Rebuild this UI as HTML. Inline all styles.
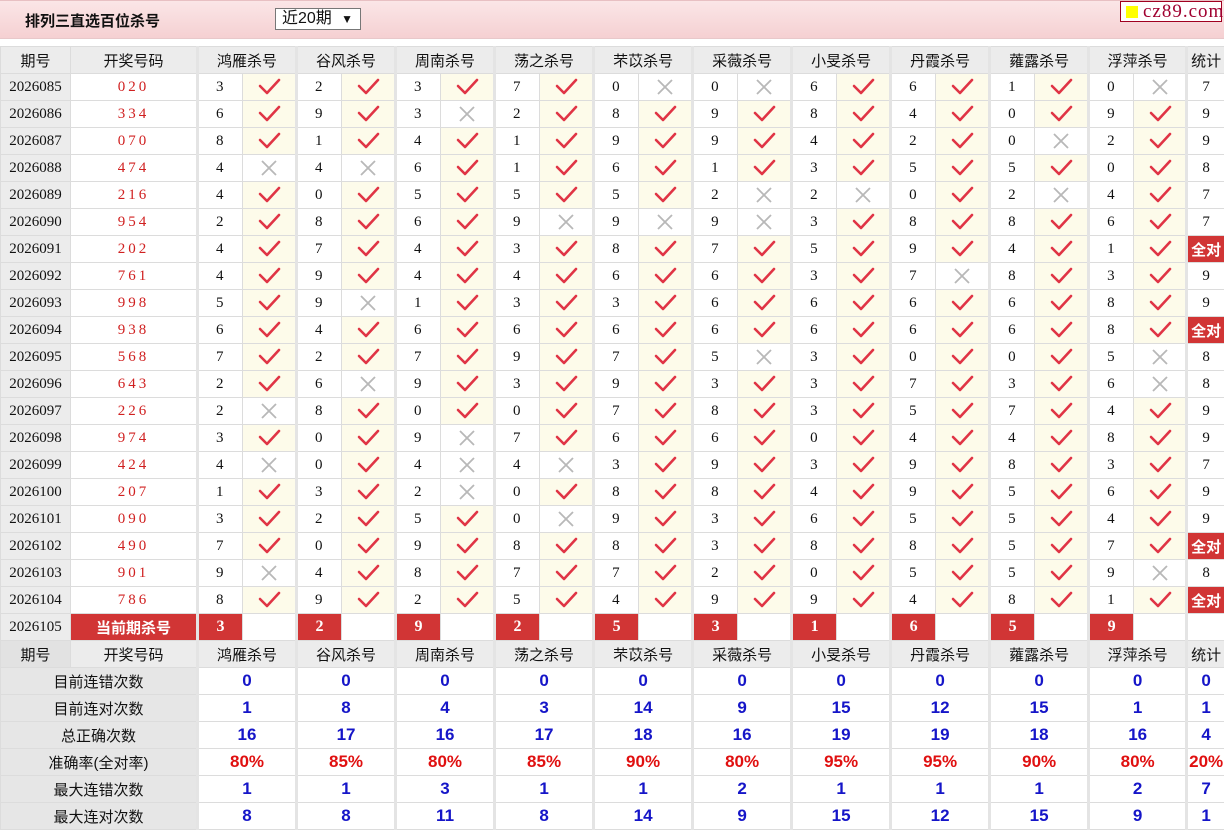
<!DOCTYPE html>
<html><head><meta charset="utf-8">
<style>
body{margin:0;width:1224px;height:828px;overflow:hidden;background:#fff;font-family:"Liberation Sans","Noto Sans CJK SC",sans-serif;}
.bar{position:absolute;left:0;top:0;width:1224px;height:37px;background:linear-gradient(#fbe6e7,#f5d0d2);border-top:1px solid #e8c0c3;border-bottom:1px solid #e8c8ca;}
.title{position:absolute;left:25px;top:9px;font-size:15px;font-weight:bold;color:#111;}
.sel{position:absolute;left:275px;top:7px;width:86px;height:22px;border:1px solid #777;background:#fff;font-size:16px;box-sizing:border-box;padding-left:6px;line-height:20px;color:#111;}
.sel span{position:absolute;right:7px;top:0;font-size:12px;}
.logo{position:absolute;left:1120px;top:0;width:102px;height:21px;border:1px solid #a00020;background:#fff;box-sizing:border-box;font-family:"Liberation Serif",serif;font-size:19px;color:#a00030;line-height:19px;padding-left:22px;letter-spacing:1px;}
.logo b{position:absolute;left:5px;top:4px;width:12px;height:12px;background:#ffff00;}
table{position:absolute;left:0;top:46px;border-collapse:collapse;table-layout:fixed;width:1224px;}
td{height:26px;border:1px solid #dcdcdc;padding:0;text-align:center;font-family:"Liberation Serif","Noto Sans CJK SC",serif;font-size:15px;color:#111;white-space:nowrap;overflow:hidden;}
td.p{background:#ececec;}
td.h{background:#ececec;font-family:"Liberation Sans","Noto Sans CJK SC",sans-serif;font-size:15px;}
td.n{color:#d02020;letter-spacing:3px;}
td.g{border-left:3px solid #e4e4e4;text-align:left;padding-left:17px;}
td.c{background:#fdfbea;}
td.s{border-left:3px solid #e4e4e4;}
svg{display:block;margin:0 auto;}
td.q{background:#d13535;color:#fff;font-weight:bold;font-family:"Liberation Sans","Noto Sans CJK SC",sans-serif;font-size:15px;}
td.cur{background:#d13535;color:#fff;font-weight:bold;font-size:16px;border-left:3px solid #e4e4e4;}
td.l{background:#e6e6e6;font-family:"Liberation Sans","Noto Sans CJK SC",sans-serif;}
td.v{border-left:3px solid #e4e4e4;font-family:"Liberation Sans",sans-serif;font-weight:bold;font-size:17px;color:#1515c8;}
td.r{color:#e01010;}
</style></head><body>
<svg width="0" height="0" style="position:absolute"><defs>
<symbol id="k" viewBox="0 0 24 20"><path d="M3 9 L10 16 L22 3" fill="none" stroke="#e03445" stroke-width="2.6" stroke-linecap="round" stroke-linejoin="round"/></symbol>
<symbol id="x" viewBox="0 0 20 20"><path d="M3 3 L17 17 M17 3 L3 17" fill="none" stroke="#b8b8b8" stroke-width="1.8"/></symbol>
</defs></svg>
<div class="bar"><div class="title">排列三直选百位杀号</div><div class="sel">近20期<span>&#9660;</span></div><div class="logo"><b></b>cz89.com</div></div>
<table>
<colgroup><col style="width:70px"><col style="width:127px">
<col style="width:45px"><col style="width:54px"><col style="width:45px"><col style="width:54px"><col style="width:45px"><col style="width:54px"><col style="width:45px"><col style="width:54px"><col style="width:45px"><col style="width:54px"><col style="width:45px"><col style="width:54px"><col style="width:45px"><col style="width:54px"><col style="width:45px"><col style="width:54px"><col style="width:45px"><col style="width:54px"><col style="width:45px"><col style="width:53px"><col style="width:38px"></colgroup>
<tr><td class="h">期号</td><td class="h">开奖号码</td><td class="h s" colspan="2">鸿雁杀号</td><td class="h s" colspan="2">谷风杀号</td><td class="h s" colspan="2">周南杀号</td><td class="h s" colspan="2">荡之杀号</td><td class="h s" colspan="2">芣苡杀号</td><td class="h s" colspan="2">采薇杀号</td><td class="h s" colspan="2">小旻杀号</td><td class="h s" colspan="2">丹霞杀号</td><td class="h s" colspan="2">蕹露杀号</td><td class="h s" colspan="2">浮萍杀号</td><td class="h s">统计</td></tr>
<tr><td class="p">2026085</td><td class="n">020</td><td class="g">3</td><td class="c"><svg width="24" height="20"><use href="#k"/></svg></td><td class="g">2</td><td class="c"><svg width="24" height="20"><use href="#k"/></svg></td><td class="g">3</td><td class="c"><svg width="24" height="20"><use href="#k"/></svg></td><td class="g">7</td><td class="c"><svg width="24" height="20"><use href="#k"/></svg></td><td class="g">0</td><td><svg width="20" height="20"><use href="#x"/></svg></td><td class="g">0</td><td><svg width="20" height="20"><use href="#x"/></svg></td><td class="g">6</td><td class="c"><svg width="24" height="20"><use href="#k"/></svg></td><td class="g">6</td><td class="c"><svg width="24" height="20"><use href="#k"/></svg></td><td class="g">1</td><td class="c"><svg width="24" height="20"><use href="#k"/></svg></td><td class="g">0</td><td><svg width="20" height="20"><use href="#x"/></svg></td><td class="s">7</td></tr>
<tr><td class="p">2026086</td><td class="n">334</td><td class="g">6</td><td class="c"><svg width="24" height="20"><use href="#k"/></svg></td><td class="g">9</td><td class="c"><svg width="24" height="20"><use href="#k"/></svg></td><td class="g">3</td><td><svg width="20" height="20"><use href="#x"/></svg></td><td class="g">2</td><td class="c"><svg width="24" height="20"><use href="#k"/></svg></td><td class="g">8</td><td class="c"><svg width="24" height="20"><use href="#k"/></svg></td><td class="g">9</td><td class="c"><svg width="24" height="20"><use href="#k"/></svg></td><td class="g">8</td><td class="c"><svg width="24" height="20"><use href="#k"/></svg></td><td class="g">4</td><td class="c"><svg width="24" height="20"><use href="#k"/></svg></td><td class="g">0</td><td class="c"><svg width="24" height="20"><use href="#k"/></svg></td><td class="g">9</td><td class="c"><svg width="24" height="20"><use href="#k"/></svg></td><td class="s">9</td></tr>
<tr><td class="p">2026087</td><td class="n">070</td><td class="g">8</td><td class="c"><svg width="24" height="20"><use href="#k"/></svg></td><td class="g">1</td><td class="c"><svg width="24" height="20"><use href="#k"/></svg></td><td class="g">4</td><td class="c"><svg width="24" height="20"><use href="#k"/></svg></td><td class="g">1</td><td class="c"><svg width="24" height="20"><use href="#k"/></svg></td><td class="g">9</td><td class="c"><svg width="24" height="20"><use href="#k"/></svg></td><td class="g">9</td><td class="c"><svg width="24" height="20"><use href="#k"/></svg></td><td class="g">4</td><td class="c"><svg width="24" height="20"><use href="#k"/></svg></td><td class="g">2</td><td class="c"><svg width="24" height="20"><use href="#k"/></svg></td><td class="g">0</td><td><svg width="20" height="20"><use href="#x"/></svg></td><td class="g">2</td><td class="c"><svg width="24" height="20"><use href="#k"/></svg></td><td class="s">9</td></tr>
<tr><td class="p">2026088</td><td class="n">474</td><td class="g">4</td><td><svg width="20" height="20"><use href="#x"/></svg></td><td class="g">4</td><td><svg width="20" height="20"><use href="#x"/></svg></td><td class="g">6</td><td class="c"><svg width="24" height="20"><use href="#k"/></svg></td><td class="g">1</td><td class="c"><svg width="24" height="20"><use href="#k"/></svg></td><td class="g">6</td><td class="c"><svg width="24" height="20"><use href="#k"/></svg></td><td class="g">1</td><td class="c"><svg width="24" height="20"><use href="#k"/></svg></td><td class="g">3</td><td class="c"><svg width="24" height="20"><use href="#k"/></svg></td><td class="g">5</td><td class="c"><svg width="24" height="20"><use href="#k"/></svg></td><td class="g">5</td><td class="c"><svg width="24" height="20"><use href="#k"/></svg></td><td class="g">0</td><td class="c"><svg width="24" height="20"><use href="#k"/></svg></td><td class="s">8</td></tr>
<tr><td class="p">2026089</td><td class="n">216</td><td class="g">4</td><td class="c"><svg width="24" height="20"><use href="#k"/></svg></td><td class="g">0</td><td class="c"><svg width="24" height="20"><use href="#k"/></svg></td><td class="g">5</td><td class="c"><svg width="24" height="20"><use href="#k"/></svg></td><td class="g">5</td><td class="c"><svg width="24" height="20"><use href="#k"/></svg></td><td class="g">5</td><td class="c"><svg width="24" height="20"><use href="#k"/></svg></td><td class="g">2</td><td><svg width="20" height="20"><use href="#x"/></svg></td><td class="g">2</td><td><svg width="20" height="20"><use href="#x"/></svg></td><td class="g">0</td><td class="c"><svg width="24" height="20"><use href="#k"/></svg></td><td class="g">2</td><td><svg width="20" height="20"><use href="#x"/></svg></td><td class="g">4</td><td class="c"><svg width="24" height="20"><use href="#k"/></svg></td><td class="s">7</td></tr>
<tr><td class="p">2026090</td><td class="n">954</td><td class="g">2</td><td class="c"><svg width="24" height="20"><use href="#k"/></svg></td><td class="g">8</td><td class="c"><svg width="24" height="20"><use href="#k"/></svg></td><td class="g">6</td><td class="c"><svg width="24" height="20"><use href="#k"/></svg></td><td class="g">9</td><td><svg width="20" height="20"><use href="#x"/></svg></td><td class="g">9</td><td><svg width="20" height="20"><use href="#x"/></svg></td><td class="g">9</td><td><svg width="20" height="20"><use href="#x"/></svg></td><td class="g">3</td><td class="c"><svg width="24" height="20"><use href="#k"/></svg></td><td class="g">8</td><td class="c"><svg width="24" height="20"><use href="#k"/></svg></td><td class="g">8</td><td class="c"><svg width="24" height="20"><use href="#k"/></svg></td><td class="g">6</td><td class="c"><svg width="24" height="20"><use href="#k"/></svg></td><td class="s">7</td></tr>
<tr><td class="p">2026091</td><td class="n">202</td><td class="g">4</td><td class="c"><svg width="24" height="20"><use href="#k"/></svg></td><td class="g">7</td><td class="c"><svg width="24" height="20"><use href="#k"/></svg></td><td class="g">4</td><td class="c"><svg width="24" height="20"><use href="#k"/></svg></td><td class="g">3</td><td class="c"><svg width="24" height="20"><use href="#k"/></svg></td><td class="g">8</td><td class="c"><svg width="24" height="20"><use href="#k"/></svg></td><td class="g">7</td><td class="c"><svg width="24" height="20"><use href="#k"/></svg></td><td class="g">5</td><td class="c"><svg width="24" height="20"><use href="#k"/></svg></td><td class="g">9</td><td class="c"><svg width="24" height="20"><use href="#k"/></svg></td><td class="g">4</td><td class="c"><svg width="24" height="20"><use href="#k"/></svg></td><td class="g">1</td><td class="c"><svg width="24" height="20"><use href="#k"/></svg></td><td class="s q">全对</td></tr>
<tr><td class="p">2026092</td><td class="n">761</td><td class="g">4</td><td class="c"><svg width="24" height="20"><use href="#k"/></svg></td><td class="g">9</td><td class="c"><svg width="24" height="20"><use href="#k"/></svg></td><td class="g">4</td><td class="c"><svg width="24" height="20"><use href="#k"/></svg></td><td class="g">4</td><td class="c"><svg width="24" height="20"><use href="#k"/></svg></td><td class="g">6</td><td class="c"><svg width="24" height="20"><use href="#k"/></svg></td><td class="g">6</td><td class="c"><svg width="24" height="20"><use href="#k"/></svg></td><td class="g">3</td><td class="c"><svg width="24" height="20"><use href="#k"/></svg></td><td class="g">7</td><td><svg width="20" height="20"><use href="#x"/></svg></td><td class="g">8</td><td class="c"><svg width="24" height="20"><use href="#k"/></svg></td><td class="g">3</td><td class="c"><svg width="24" height="20"><use href="#k"/></svg></td><td class="s">9</td></tr>
<tr><td class="p">2026093</td><td class="n">998</td><td class="g">5</td><td class="c"><svg width="24" height="20"><use href="#k"/></svg></td><td class="g">9</td><td><svg width="20" height="20"><use href="#x"/></svg></td><td class="g">1</td><td class="c"><svg width="24" height="20"><use href="#k"/></svg></td><td class="g">3</td><td class="c"><svg width="24" height="20"><use href="#k"/></svg></td><td class="g">3</td><td class="c"><svg width="24" height="20"><use href="#k"/></svg></td><td class="g">6</td><td class="c"><svg width="24" height="20"><use href="#k"/></svg></td><td class="g">6</td><td class="c"><svg width="24" height="20"><use href="#k"/></svg></td><td class="g">6</td><td class="c"><svg width="24" height="20"><use href="#k"/></svg></td><td class="g">6</td><td class="c"><svg width="24" height="20"><use href="#k"/></svg></td><td class="g">8</td><td class="c"><svg width="24" height="20"><use href="#k"/></svg></td><td class="s">9</td></tr>
<tr><td class="p">2026094</td><td class="n">938</td><td class="g">6</td><td class="c"><svg width="24" height="20"><use href="#k"/></svg></td><td class="g">4</td><td class="c"><svg width="24" height="20"><use href="#k"/></svg></td><td class="g">6</td><td class="c"><svg width="24" height="20"><use href="#k"/></svg></td><td class="g">6</td><td class="c"><svg width="24" height="20"><use href="#k"/></svg></td><td class="g">6</td><td class="c"><svg width="24" height="20"><use href="#k"/></svg></td><td class="g">6</td><td class="c"><svg width="24" height="20"><use href="#k"/></svg></td><td class="g">6</td><td class="c"><svg width="24" height="20"><use href="#k"/></svg></td><td class="g">6</td><td class="c"><svg width="24" height="20"><use href="#k"/></svg></td><td class="g">6</td><td class="c"><svg width="24" height="20"><use href="#k"/></svg></td><td class="g">8</td><td class="c"><svg width="24" height="20"><use href="#k"/></svg></td><td class="s q">全对</td></tr>
<tr><td class="p">2026095</td><td class="n">568</td><td class="g">7</td><td class="c"><svg width="24" height="20"><use href="#k"/></svg></td><td class="g">2</td><td class="c"><svg width="24" height="20"><use href="#k"/></svg></td><td class="g">7</td><td class="c"><svg width="24" height="20"><use href="#k"/></svg></td><td class="g">9</td><td class="c"><svg width="24" height="20"><use href="#k"/></svg></td><td class="g">7</td><td class="c"><svg width="24" height="20"><use href="#k"/></svg></td><td class="g">5</td><td><svg width="20" height="20"><use href="#x"/></svg></td><td class="g">3</td><td class="c"><svg width="24" height="20"><use href="#k"/></svg></td><td class="g">0</td><td class="c"><svg width="24" height="20"><use href="#k"/></svg></td><td class="g">0</td><td class="c"><svg width="24" height="20"><use href="#k"/></svg></td><td class="g">5</td><td><svg width="20" height="20"><use href="#x"/></svg></td><td class="s">8</td></tr>
<tr><td class="p">2026096</td><td class="n">643</td><td class="g">2</td><td class="c"><svg width="24" height="20"><use href="#k"/></svg></td><td class="g">6</td><td><svg width="20" height="20"><use href="#x"/></svg></td><td class="g">9</td><td class="c"><svg width="24" height="20"><use href="#k"/></svg></td><td class="g">3</td><td class="c"><svg width="24" height="20"><use href="#k"/></svg></td><td class="g">9</td><td class="c"><svg width="24" height="20"><use href="#k"/></svg></td><td class="g">3</td><td class="c"><svg width="24" height="20"><use href="#k"/></svg></td><td class="g">3</td><td class="c"><svg width="24" height="20"><use href="#k"/></svg></td><td class="g">7</td><td class="c"><svg width="24" height="20"><use href="#k"/></svg></td><td class="g">3</td><td class="c"><svg width="24" height="20"><use href="#k"/></svg></td><td class="g">6</td><td><svg width="20" height="20"><use href="#x"/></svg></td><td class="s">8</td></tr>
<tr><td class="p">2026097</td><td class="n">226</td><td class="g">2</td><td><svg width="20" height="20"><use href="#x"/></svg></td><td class="g">8</td><td class="c"><svg width="24" height="20"><use href="#k"/></svg></td><td class="g">0</td><td class="c"><svg width="24" height="20"><use href="#k"/></svg></td><td class="g">0</td><td class="c"><svg width="24" height="20"><use href="#k"/></svg></td><td class="g">7</td><td class="c"><svg width="24" height="20"><use href="#k"/></svg></td><td class="g">8</td><td class="c"><svg width="24" height="20"><use href="#k"/></svg></td><td class="g">3</td><td class="c"><svg width="24" height="20"><use href="#k"/></svg></td><td class="g">5</td><td class="c"><svg width="24" height="20"><use href="#k"/></svg></td><td class="g">7</td><td class="c"><svg width="24" height="20"><use href="#k"/></svg></td><td class="g">4</td><td class="c"><svg width="24" height="20"><use href="#k"/></svg></td><td class="s">9</td></tr>
<tr><td class="p">2026098</td><td class="n">974</td><td class="g">3</td><td class="c"><svg width="24" height="20"><use href="#k"/></svg></td><td class="g">0</td><td class="c"><svg width="24" height="20"><use href="#k"/></svg></td><td class="g">9</td><td><svg width="20" height="20"><use href="#x"/></svg></td><td class="g">7</td><td class="c"><svg width="24" height="20"><use href="#k"/></svg></td><td class="g">6</td><td class="c"><svg width="24" height="20"><use href="#k"/></svg></td><td class="g">6</td><td class="c"><svg width="24" height="20"><use href="#k"/></svg></td><td class="g">0</td><td class="c"><svg width="24" height="20"><use href="#k"/></svg></td><td class="g">4</td><td class="c"><svg width="24" height="20"><use href="#k"/></svg></td><td class="g">4</td><td class="c"><svg width="24" height="20"><use href="#k"/></svg></td><td class="g">8</td><td class="c"><svg width="24" height="20"><use href="#k"/></svg></td><td class="s">9</td></tr>
<tr><td class="p">2026099</td><td class="n">424</td><td class="g">4</td><td><svg width="20" height="20"><use href="#x"/></svg></td><td class="g">0</td><td class="c"><svg width="24" height="20"><use href="#k"/></svg></td><td class="g">4</td><td><svg width="20" height="20"><use href="#x"/></svg></td><td class="g">4</td><td><svg width="20" height="20"><use href="#x"/></svg></td><td class="g">3</td><td class="c"><svg width="24" height="20"><use href="#k"/></svg></td><td class="g">9</td><td class="c"><svg width="24" height="20"><use href="#k"/></svg></td><td class="g">3</td><td class="c"><svg width="24" height="20"><use href="#k"/></svg></td><td class="g">9</td><td class="c"><svg width="24" height="20"><use href="#k"/></svg></td><td class="g">8</td><td class="c"><svg width="24" height="20"><use href="#k"/></svg></td><td class="g">3</td><td class="c"><svg width="24" height="20"><use href="#k"/></svg></td><td class="s">7</td></tr>
<tr><td class="p">2026100</td><td class="n">207</td><td class="g">1</td><td class="c"><svg width="24" height="20"><use href="#k"/></svg></td><td class="g">3</td><td class="c"><svg width="24" height="20"><use href="#k"/></svg></td><td class="g">2</td><td><svg width="20" height="20"><use href="#x"/></svg></td><td class="g">0</td><td class="c"><svg width="24" height="20"><use href="#k"/></svg></td><td class="g">8</td><td class="c"><svg width="24" height="20"><use href="#k"/></svg></td><td class="g">8</td><td class="c"><svg width="24" height="20"><use href="#k"/></svg></td><td class="g">4</td><td class="c"><svg width="24" height="20"><use href="#k"/></svg></td><td class="g">9</td><td class="c"><svg width="24" height="20"><use href="#k"/></svg></td><td class="g">5</td><td class="c"><svg width="24" height="20"><use href="#k"/></svg></td><td class="g">6</td><td class="c"><svg width="24" height="20"><use href="#k"/></svg></td><td class="s">9</td></tr>
<tr><td class="p">2026101</td><td class="n">090</td><td class="g">3</td><td class="c"><svg width="24" height="20"><use href="#k"/></svg></td><td class="g">2</td><td class="c"><svg width="24" height="20"><use href="#k"/></svg></td><td class="g">5</td><td class="c"><svg width="24" height="20"><use href="#k"/></svg></td><td class="g">0</td><td><svg width="20" height="20"><use href="#x"/></svg></td><td class="g">9</td><td class="c"><svg width="24" height="20"><use href="#k"/></svg></td><td class="g">3</td><td class="c"><svg width="24" height="20"><use href="#k"/></svg></td><td class="g">6</td><td class="c"><svg width="24" height="20"><use href="#k"/></svg></td><td class="g">5</td><td class="c"><svg width="24" height="20"><use href="#k"/></svg></td><td class="g">5</td><td class="c"><svg width="24" height="20"><use href="#k"/></svg></td><td class="g">4</td><td class="c"><svg width="24" height="20"><use href="#k"/></svg></td><td class="s">9</td></tr>
<tr><td class="p">2026102</td><td class="n">490</td><td class="g">7</td><td class="c"><svg width="24" height="20"><use href="#k"/></svg></td><td class="g">0</td><td class="c"><svg width="24" height="20"><use href="#k"/></svg></td><td class="g">9</td><td class="c"><svg width="24" height="20"><use href="#k"/></svg></td><td class="g">8</td><td class="c"><svg width="24" height="20"><use href="#k"/></svg></td><td class="g">8</td><td class="c"><svg width="24" height="20"><use href="#k"/></svg></td><td class="g">3</td><td class="c"><svg width="24" height="20"><use href="#k"/></svg></td><td class="g">8</td><td class="c"><svg width="24" height="20"><use href="#k"/></svg></td><td class="g">8</td><td class="c"><svg width="24" height="20"><use href="#k"/></svg></td><td class="g">5</td><td class="c"><svg width="24" height="20"><use href="#k"/></svg></td><td class="g">7</td><td class="c"><svg width="24" height="20"><use href="#k"/></svg></td><td class="s q">全对</td></tr>
<tr><td class="p">2026103</td><td class="n">901</td><td class="g">9</td><td><svg width="20" height="20"><use href="#x"/></svg></td><td class="g">4</td><td class="c"><svg width="24" height="20"><use href="#k"/></svg></td><td class="g">8</td><td class="c"><svg width="24" height="20"><use href="#k"/></svg></td><td class="g">7</td><td class="c"><svg width="24" height="20"><use href="#k"/></svg></td><td class="g">7</td><td class="c"><svg width="24" height="20"><use href="#k"/></svg></td><td class="g">2</td><td class="c"><svg width="24" height="20"><use href="#k"/></svg></td><td class="g">0</td><td class="c"><svg width="24" height="20"><use href="#k"/></svg></td><td class="g">5</td><td class="c"><svg width="24" height="20"><use href="#k"/></svg></td><td class="g">5</td><td class="c"><svg width="24" height="20"><use href="#k"/></svg></td><td class="g">9</td><td><svg width="20" height="20"><use href="#x"/></svg></td><td class="s">8</td></tr>
<tr><td class="p">2026104</td><td class="n">786</td><td class="g">8</td><td class="c"><svg width="24" height="20"><use href="#k"/></svg></td><td class="g">9</td><td class="c"><svg width="24" height="20"><use href="#k"/></svg></td><td class="g">2</td><td class="c"><svg width="24" height="20"><use href="#k"/></svg></td><td class="g">5</td><td class="c"><svg width="24" height="20"><use href="#k"/></svg></td><td class="g">4</td><td class="c"><svg width="24" height="20"><use href="#k"/></svg></td><td class="g">9</td><td class="c"><svg width="24" height="20"><use href="#k"/></svg></td><td class="g">9</td><td class="c"><svg width="24" height="20"><use href="#k"/></svg></td><td class="g">4</td><td class="c"><svg width="24" height="20"><use href="#k"/></svg></td><td class="g">8</td><td class="c"><svg width="24" height="20"><use href="#k"/></svg></td><td class="g">1</td><td class="c"><svg width="24" height="20"><use href="#k"/></svg></td><td class="s q">全对</td></tr>
<tr><td class="p">2026105</td><td class="q">当前期杀号</td><td class="cur">3</td><td></td><td class="cur">2</td><td></td><td class="cur">9</td><td></td><td class="cur">2</td><td></td><td class="cur">5</td><td></td><td class="cur">3</td><td></td><td class="cur">1</td><td></td><td class="cur">6</td><td></td><td class="cur">5</td><td></td><td class="cur">9</td><td></td><td class="s"></td></tr>
<tr><td class="h" style="background:#e2e2e2">期号</td><td class="h">开奖号码</td><td class="h s" colspan="2">鸿雁杀号</td><td class="h s" colspan="2">谷风杀号</td><td class="h s" colspan="2">周南杀号</td><td class="h s" colspan="2">荡之杀号</td><td class="h s" colspan="2">芣苡杀号</td><td class="h s" colspan="2">采薇杀号</td><td class="h s" colspan="2">小旻杀号</td><td class="h s" colspan="2">丹霞杀号</td><td class="h s" colspan="2">蕹露杀号</td><td class="h s" colspan="2">浮萍杀号</td><td class="h s">统计</td></tr>
<tr><td class="l" colspan="2">目前连错次数</td><td class="v" colspan="2">0</td><td class="v" colspan="2">0</td><td class="v" colspan="2">0</td><td class="v" colspan="2">0</td><td class="v" colspan="2">0</td><td class="v" colspan="2">0</td><td class="v" colspan="2">0</td><td class="v" colspan="2">0</td><td class="v" colspan="2">0</td><td class="v" colspan="2">0</td><td class="v">0</td></tr>
<tr><td class="l" colspan="2">目前连对次数</td><td class="v" colspan="2">1</td><td class="v" colspan="2">8</td><td class="v" colspan="2">4</td><td class="v" colspan="2">3</td><td class="v" colspan="2">14</td><td class="v" colspan="2">9</td><td class="v" colspan="2">15</td><td class="v" colspan="2">12</td><td class="v" colspan="2">15</td><td class="v" colspan="2">1</td><td class="v">1</td></tr>
<tr><td class="l" colspan="2">总正确次数</td><td class="v" colspan="2">16</td><td class="v" colspan="2">17</td><td class="v" colspan="2">16</td><td class="v" colspan="2">17</td><td class="v" colspan="2">18</td><td class="v" colspan="2">16</td><td class="v" colspan="2">19</td><td class="v" colspan="2">19</td><td class="v" colspan="2">18</td><td class="v" colspan="2">16</td><td class="v">4</td></tr>
<tr><td class="l" colspan="2">准确率(全对率)</td><td class="v r" colspan="2">80%</td><td class="v r" colspan="2">85%</td><td class="v r" colspan="2">80%</td><td class="v r" colspan="2">85%</td><td class="v r" colspan="2">90%</td><td class="v r" colspan="2">80%</td><td class="v r" colspan="2">95%</td><td class="v r" colspan="2">95%</td><td class="v r" colspan="2">90%</td><td class="v r" colspan="2">80%</td><td class="v r">20%</td></tr>
<tr><td class="l" colspan="2">最大连错次数</td><td class="v" colspan="2">1</td><td class="v" colspan="2">1</td><td class="v" colspan="2">3</td><td class="v" colspan="2">1</td><td class="v" colspan="2">1</td><td class="v" colspan="2">2</td><td class="v" colspan="2">1</td><td class="v" colspan="2">1</td><td class="v" colspan="2">1</td><td class="v" colspan="2">2</td><td class="v">7</td></tr>
<tr><td class="l" colspan="2">最大连对次数</td><td class="v" colspan="2">8</td><td class="v" colspan="2">8</td><td class="v" colspan="2">11</td><td class="v" colspan="2">8</td><td class="v" colspan="2">14</td><td class="v" colspan="2">9</td><td class="v" colspan="2">15</td><td class="v" colspan="2">12</td><td class="v" colspan="2">15</td><td class="v" colspan="2">9</td><td class="v">1</td></tr>
</table>
</body></html>
